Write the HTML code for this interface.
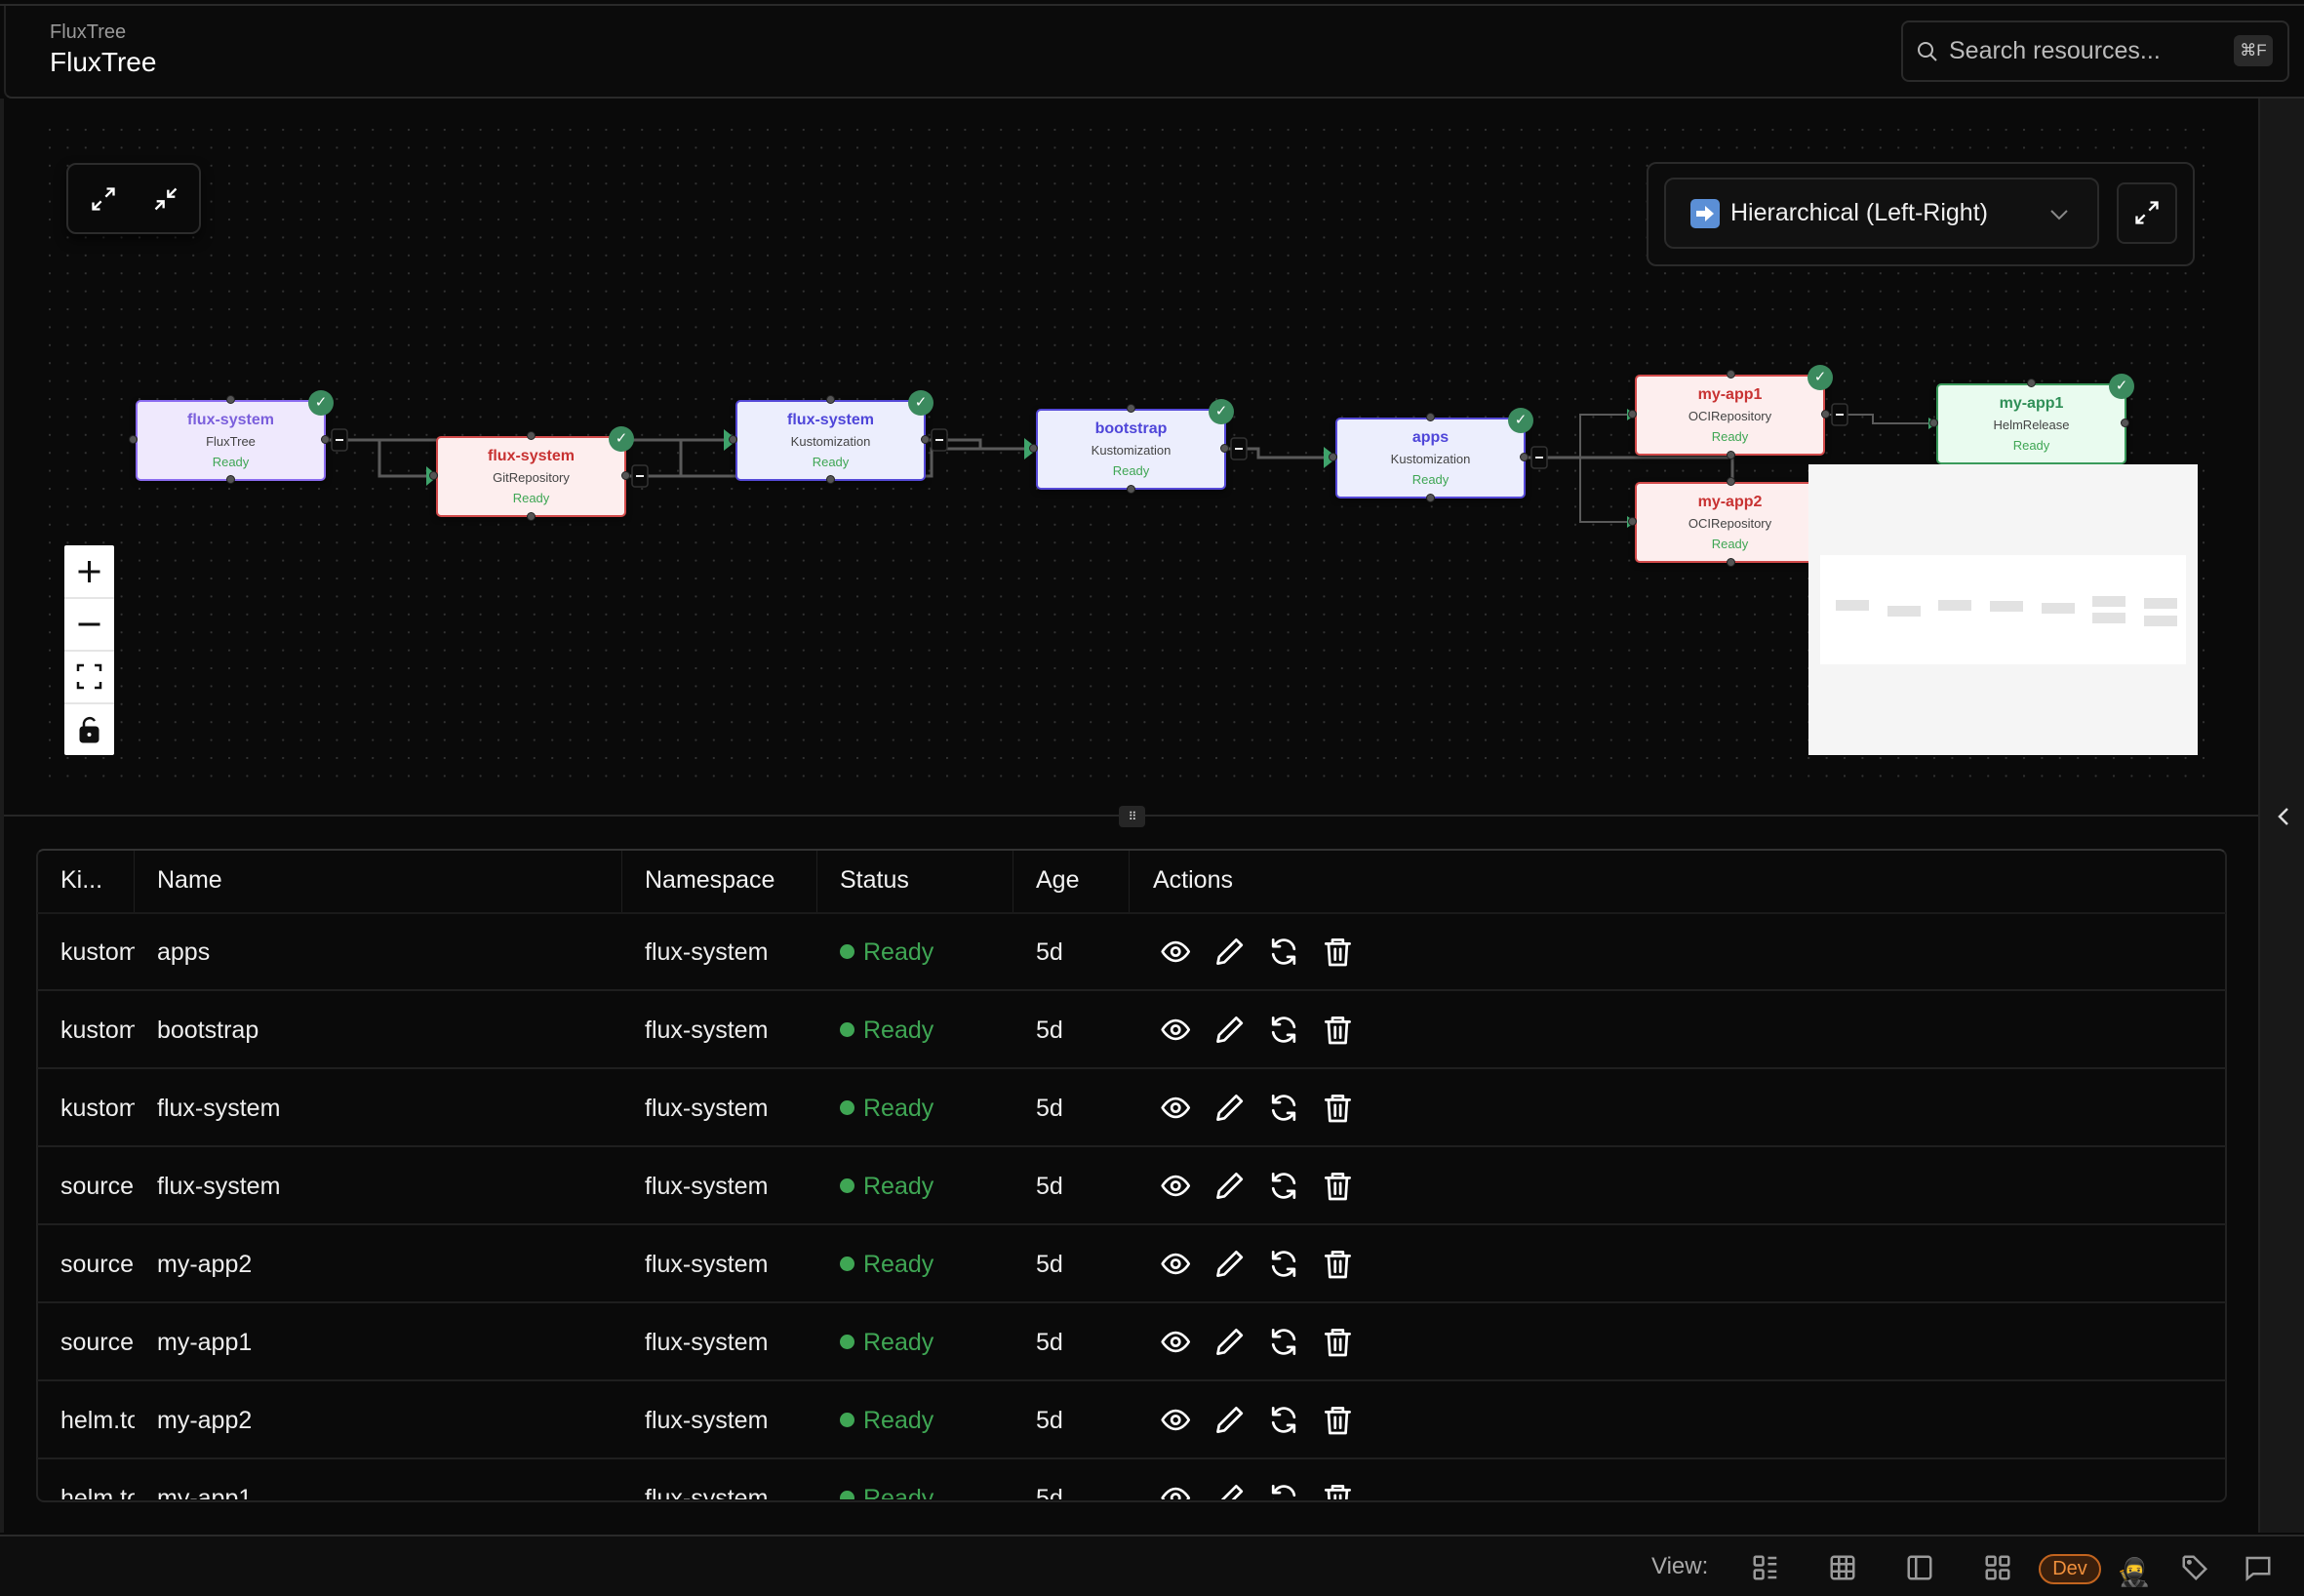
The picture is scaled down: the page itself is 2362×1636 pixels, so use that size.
<!DOCTYPE html>
<html><head><meta charset="utf-8"><style>
*{box-sizing:border-box;margin:0;padding:0}
body{width:2362px;height:1636px;background:#0a0a0a;font-family:"Liberation Sans",sans-serif;color:#eee;position:relative;overflow:hidden}
.abs{position:absolute}
.node{position:absolute;width:195px;height:83px;border:2px solid;border-radius:5px;text-align:center;box-shadow:0 2px 6px rgba(0,0,0,.5)}
.node .t{font-size:16px;font-weight:bold;margin-top:10px;line-height:18px}
.node .k{font-size:13px;color:#444;margin-top:5px;line-height:15px}
.node .r{font-size:13px;color:#3fa654;margin-top:6px;line-height:15px}
.pu{background:#efe9fd;border-color:#8b6cf0}.pu .t{color:#7b5fdc}
.re{background:#fdeeee;border-color:#d24a4a}.re .t{color:#c83232}
.bl{background:#eceefd;border-color:#5549d8}.bl .t{color:#4f46d9}
.gr{background:#e9fbef;border-color:#3a9a5b}.gr .t{color:#2f8f57}
.badge{position:absolute;right:-10px;top:-12px;width:26px;height:26px;border-radius:50%;background:#3b8a5e;color:#fff;font-size:15px;line-height:26px;text-align:center}
.hd{position:absolute;width:9px;height:9px;border-radius:50%;background:#555;border:1px solid #222}
.th{position:absolute;top:870px;height:65px;line-height:65px;font-size:25px;color:#f2f2f2}
.rw{position:absolute;height:80px;width:2244px;border-bottom:2px solid #1f1f1f}
.rw span{position:absolute;top:26px}
.rw .k{left:24px;width:76px;overflow:hidden;white-space:nowrap}
.rw .n{left:123px}.rw .ns{left:623px}
.rw .dot{left:823px;top:32px;width:15px;height:15px;border-radius:50%;background:#3fa654}
.rw .st{left:847px;color:#3fa654}.rw .a{left:1024px}
.rw svg{position:absolute;left:1151px;top:23px}
</style></head><body>
<div class="abs" style="left:0;top:4px;width:2362px;height:2px;background:#2a2a2a"></div>
<div class="abs" style="left:4px;top:6px;width:2358px;height:95px;background:#0b0b0b;border-bottom:2px solid #2a2a2a;border-left:2px solid #222;border-radius:0 0 0 8px"></div>
<div class="abs" style="left:51px;top:22px;font-size:20px;color:#999">FluxTree</div>
<div class="abs" style="left:51px;top:48px;font-size:28px;color:#fff">FluxTree</div>
<div class="abs" style="left:1949px;top:21px;width:398px;height:63px;border:2px solid #2a2a2a;border-radius:8px;background:#0c0c0c"></div>
<svg class="abs" style="left:1964px;top:41px" width="24" height="24" viewBox="0 0 24 24" fill="none" stroke="#bbb" stroke-width="2"><circle cx="10" cy="10" r="7"/><path d="M15 15l6 6"/></svg>
<div class="abs" style="left:1998px;top:38px;font-size:25px;color:#bbb">Search resources...</div>
<div class="abs" style="left:2290px;top:36px;width:40px;height:32px;background:#2a2a2a;border-radius:6px;color:#ccc;font-size:17px;line-height:32px;text-align:center">⌘F</div>

<div class="abs" style="left:2315px;top:101px;width:47px;height:1470px;background:#181818;border-left:2px solid #222"></div>
<svg class="abs" style="left:2332px;top:826px" width="20" height="22" viewBox="0 0 20 22" fill="none" stroke="#ddd" stroke-width="2.5"><path d="M13 3l-8 8 8 8"/></svg>

<svg class="abs" style="left:50px;top:132px" width="2220" height="675">
<defs><pattern id="d" width="18.4" height="18.4" patternUnits="userSpaceOnUse"><circle cx="1" cy="1" r="1.1" fill="#333"/></pattern></defs>
<rect width="2220" height="675" fill="url(#d)"/></svg>

<svg class="abs" style="left:0;top:0" width="2362" height="900" fill="none" stroke="#5a5a5a" stroke-width="3">
<path d="M334 451H744"/>
<path d="M389 451V488H437"/>
<path d="M642 488H698V451"/>
<path d="M642 488H955V460H1052"/>
<path d="M949 451H1005V460"/>
<path d="M1256 460H1290V469H1359"/>
<path d="M1563 469H1776V494"/>
<path d="M1620 469V425H1668M1620 469V535H1668" stroke-width="2"/>
<path d="M1872 425H1920V434H1977" stroke-width="2"/>
<g fill="#3fa36b" stroke="none">
<path d="M437 478L449 488L437 498Z"/><path d="M742 440L756 451L742 462Z"/>
<path d="M1050 449L1064 460L1050 471Z"/><path d="M1357 458L1371 469L1357 480Z"/>
<path d="M1668 419L1677 425L1668 431Z"/><path d="M1668 529L1677 535L1668 541Z"/><path d="M1977 428L1986 434L1977 440Z"/>
</g>
<g fill="#0a0a0a" stroke="#333" stroke-width="1.5">
<rect x="340" y="440" width="16" height="22" rx="3"/><rect x="648" y="477" width="16" height="22" rx="3"/><rect x="955" y="440" width="16" height="22" rx="3"/><rect x="1262" y="449" width="16" height="22" rx="3"/><rect x="1570" y="458" width="16" height="22" rx="3"/><rect x="1878" y="414" width="16" height="22" rx="3"/>
</g>
<g stroke="#eee" stroke-width="2"><path d="M344 451h8M652 488h8M959 451h8M1266 460h8M1574 469h8M1882 425h8"/></g>
</svg>

<div class="node pu" style="left:139px;top:410px"><div class="t">flux-system</div><div class="k">FluxTree</div><div class="r">Ready</div><div class="badge">✓</div></div>
<div class="node re" style="left:447px;top:447px"><div class="t">flux-system</div><div class="k">GitRepository</div><div class="r">Ready</div><div class="badge">✓</div></div>
<div class="node bl" style="left:754px;top:410px"><div class="t">flux-system</div><div class="k">Kustomization</div><div class="r">Ready</div><div class="badge">✓</div></div>
<div class="node bl" style="left:1062px;top:419px"><div class="t">bootstrap</div><div class="k">Kustomization</div><div class="r">Ready</div><div class="badge">✓</div></div>
<div class="node bl" style="left:1369px;top:428px"><div class="t">apps</div><div class="k">Kustomization</div><div class="r">Ready</div><div class="badge">✓</div></div>
<div class="node re" style="left:1676px;top:384px"><div class="t">my-app1</div><div class="k">OCIRepository</div><div class="r">Ready</div><div class="badge">✓</div></div>
<div class="node re" style="left:1676px;top:494px"><div class="t">my-app2</div><div class="k">OCIRepository</div><div class="r">Ready</div></div>
<div class="node gr" style="left:1985px;top:393px"><div class="t">my-app1</div><div class="k">HelmRelease</div><div class="r">Ready</div><div class="badge">✓</div></div>
<div class="hd" style="left:132px;top:446px"></div><div class="hd" style="left:329px;top:446px"></div><div class="hd" style="left:232px;top:405px"></div><div class="hd" style="left:232px;top:487px"></div>
<div class="hd" style="left:440px;top:483px"></div><div class="hd" style="left:637px;top:483px"></div><div class="hd" style="left:540px;top:442px"></div><div class="hd" style="left:540px;top:525px"></div>
<div class="hd" style="left:747px;top:446px"></div><div class="hd" style="left:944px;top:446px"></div><div class="hd" style="left:847px;top:405px"></div><div class="hd" style="left:847px;top:487px"></div>
<div class="hd" style="left:1055px;top:455px"></div><div class="hd" style="left:1251px;top:455px"></div><div class="hd" style="left:1155px;top:414px"></div><div class="hd" style="left:1155px;top:497px"></div>
<div class="hd" style="left:1362px;top:464px"></div><div class="hd" style="left:1558px;top:464px"></div><div class="hd" style="left:1462px;top:423px"></div><div class="hd" style="left:1462px;top:506px"></div>
<div class="hd" style="left:1669px;top:420px"></div><div class="hd" style="left:1867px;top:420px"></div><div class="hd" style="left:1770px;top:379px"></div><div class="hd" style="left:1770px;top:462px"></div>
<div class="hd" style="left:1669px;top:530px"></div><div class="hd" style="left:1770px;top:489px"></div><div class="hd" style="left:1770px;top:572px"></div>
<div class="hd" style="left:1978px;top:429px"></div><div class="hd" style="left:2174px;top:429px"></div><div class="hd" style="left:2078px;top:388px"></div>

<div class="abs" style="left:1854px;top:476px;width:399px;height:298px;background:#f5f5f5"></div>
<div class="abs" style="left:1866px;top:569px;width:375px;height:112px;background:#fff"></div>
<svg class="abs" style="left:1866px;top:569px" width="375" height="112" fill="#e2e2e2">
<rect x="16" y="46" width="34" height="11"/><rect x="69" y="52" width="34" height="11"/><rect x="121" y="46" width="34" height="11"/><rect x="174" y="47" width="34" height="11"/><rect x="227" y="49" width="34" height="11"/><rect x="279" y="42" width="34" height="11"/><rect x="279" y="59" width="34" height="11"/><rect x="332" y="44" width="34" height="11"/><rect x="332" y="62" width="34" height="11"/></svg>

<div class="abs" style="left:68px;top:167px;width:138px;height:73px;border:2px solid #2c2c2c;border-radius:10px;background:#0a0a0a;box-shadow:0 6px 12px rgba(0,0,0,.6)"></div>
<svg class="abs" style="left:92px;top:190px" width="28" height="28" viewBox="0 0 24 24" fill="none" stroke="#fff" stroke-width="2"><path d="M15 3h6v6M21 3l-7 7M9 21H3v-6M3 21l7-7"/></svg>
<svg class="abs" style="left:156px;top:190px" width="28" height="28" viewBox="0 0 24 24" fill="none" stroke="#fff" stroke-width="2"><path d="M4 14h6v6M10 14l-7 7M20 10h-6V4M14 10l7-7"/></svg>

<div class="abs" style="left:1688px;top:166px;width:562px;height:107px;border:2px solid #2a2a2a;border-radius:10px;background:#0c0c0c"></div>
<div class="abs" style="left:1706px;top:182px;width:446px;height:73px;border:2px solid #2a2a2a;border-radius:10px;background:#111"></div>
<div class="abs" style="left:1733px;top:204px;width:30px;height:30px;border-radius:5px;background:#5b8fd6"></div>
<svg class="abs" style="left:1736px;top:207px" width="24" height="24" viewBox="0 0 24 24"><path d="M3 9h9V4l9 8-9 8v-5H3z" fill="#fff"/></svg>
<div class="abs" style="left:1774px;top:204px;font-size:25px;color:#f0f0f0">Hierarchical (Left-Right)</div>
<svg class="abs" style="left:2099px;top:210px" width="24" height="20" viewBox="0 0 24 20" fill="none" stroke="#888" stroke-width="2"><path d="M4 6l8 8 8-8"/></svg>
<div class="abs" style="left:2170px;top:187px;width:62px;height:63px;border:2px solid #2a2a2a;border-radius:8px;background:#0f0f0f"></div>
<svg class="abs" style="left:2187px;top:204px" width="28" height="28" viewBox="0 0 24 24" fill="none" stroke="#fff" stroke-width="2"><path d="M15 3h6v6M21 3l-7 7M9 21H3v-6M3 21l7-7"/></svg>

<div class="abs" style="left:66px;top:559px;width:51px;height:215px;background:#fff;border-radius:2px"></div>
<div class="abs" style="left:66px;top:612px;width:51px;height:2px;background:#e5e5e5"></div>
<div class="abs" style="left:66px;top:666px;width:51px;height:2px;background:#e5e5e5"></div>
<div class="abs" style="left:66px;top:720px;width:51px;height:2px;background:#e5e5e5"></div>
<svg class="abs" style="left:66px;top:559px" width="51" height="215" fill="none" stroke="#111" stroke-width="3">
<path d="M25.5 16v22M14.5 27h22"/><path d="M14.5 81h22"/>
<path d="M14 129v-6h6M31 123h6v6M37 140v6h-6M20 146h-6v-6" stroke-width="2.5"/>
<rect x="17" y="187" width="17" height="14" rx="2" fill="#111"/><path d="M20 187v-5a6 6 0 0 1 11 -2" stroke-width="2.5"/><circle cx="25.5" cy="194" r="2" fill="#fff" stroke="none"/>
</svg>

<div class="abs" style="left:4px;top:835px;width:2311px;height:2px;background:#262626"></div>
<div class="abs" style="left:1147px;top:826px;width:27px;height:22px;background:#262626;border-radius:4px;color:#ddd;font-size:12px;line-height:22px;text-align:center;letter-spacing:-1px">⠿</div>
<div class="abs" style="left:0;top:101px;width:4px;height:1470px;background:#1c1c1c"></div>

<div class="abs" style="left:37px;top:870px;width:2246px;height:670px;border:2px solid #222;border-top-color:#333;border-radius:8px;background:#0a0a0a"></div>
<div class="abs" style="left:137px;top:872px;width:1px;height:63px;background:#1e1e1e"></div>
<div class="abs" style="left:637px;top:872px;width:1px;height:63px;background:#1e1e1e"></div>
<div class="abs" style="left:837px;top:872px;width:1px;height:63px;background:#1e1e1e"></div>
<div class="abs" style="left:1038px;top:872px;width:1px;height:63px;background:#1e1e1e"></div>
<div class="abs" style="left:1157px;top:872px;width:1px;height:63px;background:#1e1e1e"></div>
<div class="th" style="left:62px">Ki...</div>
<div class="th" style="left:161px">Name</div>
<div class="th" style="left:661px">Namespace</div>
<div class="th" style="left:861px">Status</div>
<div class="th" style="left:1062px">Age</div>
<div class="th" style="left:1182px">Actions</div>
<div class="abs" style="left:38px;top:935px;width:2244px;height:2px;background:#1a1a1a"></div>

<svg width="0" height="0" style="position:absolute"><defs>
<g id="icons" fill="none" stroke="#fff" stroke-width="2" stroke-linecap="round" stroke-linejoin="round">
<path d="M2 12s4-7 10-7 10 7 10 7-4 7-10 7S2 12 2 12z"/><circle cx="12" cy="12" r="3"/>
<g transform="translate(41 0)"><path d="M17 3l4 4L8 20l-5 1 1-5z"/></g>
<g transform="translate(82 0)"><path d="M20 10a8 8 0 0 0-14-4L4 8M4 3v5h5M4 14a8 8 0 0 0 14 4l2-2M20 21v-5h-5"/></g>
<g transform="translate(123 0)"><path d="M3 6h18M8 6V3h8v3M5 6l1 16h12l1-16M10 10v8M14 10v8"/></g>
</g></defs></svg>

<div class="abs" style="left:38px;top:936px;width:2244px;height:601px;overflow:hidden;font-size:25px;color:#eee">
<div class="rw" style="top:0"><span class="k">kustomization</span><span class="n">apps</span><span class="ns">flux-system</span><span class="dot"></span><span class="st">Ready</span><span class="a">5d</span><svg width="200" height="33" viewBox="0 0 148 24"><use href="#icons"/></svg></div>
<div class="rw" style="top:80px"><span class="k">kustomization</span><span class="n">bootstrap</span><span class="ns">flux-system</span><span class="dot"></span><span class="st">Ready</span><span class="a">5d</span><svg width="200" height="33" viewBox="0 0 148 24"><use href="#icons"/></svg></div>
<div class="rw" style="top:160px"><span class="k">kustomization</span><span class="n">flux-system</span><span class="ns">flux-system</span><span class="dot"></span><span class="st">Ready</span><span class="a">5d</span><svg width="200" height="33" viewBox="0 0 148 24"><use href="#icons"/></svg></div>
<div class="rw" style="top:240px"><span class="k">source.toolkit</span><span class="n">flux-system</span><span class="ns">flux-system</span><span class="dot"></span><span class="st">Ready</span><span class="a">5d</span><svg width="200" height="33" viewBox="0 0 148 24"><use href="#icons"/></svg></div>
<div class="rw" style="top:320px"><span class="k">source.toolkit</span><span class="n">my-app2</span><span class="ns">flux-system</span><span class="dot"></span><span class="st">Ready</span><span class="a">5d</span><svg width="200" height="33" viewBox="0 0 148 24"><use href="#icons"/></svg></div>
<div class="rw" style="top:400px"><span class="k">source.toolkit</span><span class="n">my-app1</span><span class="ns">flux-system</span><span class="dot"></span><span class="st">Ready</span><span class="a">5d</span><svg width="200" height="33" viewBox="0 0 148 24"><use href="#icons"/></svg></div>
<div class="rw" style="top:480px"><span class="k">helm.toolkit</span><span class="n">my-app2</span><span class="ns">flux-system</span><span class="dot"></span><span class="st">Ready</span><span class="a">5d</span><svg width="200" height="33" viewBox="0 0 148 24"><use href="#icons"/></svg></div>
<div class="rw" style="top:560px;border-bottom:none"><span class="k">helm.toolkit</span><span class="n">my-app1</span><span class="ns">flux-system</span><span class="dot"></span><span class="st">Ready</span><span class="a">5d</span><svg width="200" height="33" viewBox="0 0 148 24"><use href="#icons"/></svg></div>
</div>

<div class="abs" style="left:0;top:1573px;width:2362px;height:63px;background:#0e0e0e;border-top:2px solid #2a2a2a"></div>
<div class="abs" style="left:1693px;top:1592px;font-size:24px;color:#aaa">View:</div>
<svg class="abs" style="left:1795px;top:1592px" width="30" height="30" viewBox="0 0 24 24" fill="none" stroke="#9a9a9a" stroke-width="2"><rect x="3" y="3" width="7" height="7" rx="1"/><rect x="3" y="14" width="7" height="7" rx="1"/><path d="M14 4h7M14 9h7M14 15h7M14 20h7"/></svg>
<svg class="abs" style="left:1874px;top:1592px" width="30" height="30" viewBox="0 0 24 24" fill="none" stroke="#9a9a9a" stroke-width="2"><rect x="3" y="3" width="18" height="18" rx="2"/><path d="M3 9h18M3 15h18M9 3v18M15 3v18"/></svg>
<svg class="abs" style="left:1953px;top:1592px" width="30" height="30" viewBox="0 0 24 24" fill="none" stroke="#9a9a9a" stroke-width="2"><rect x="3" y="3" width="18" height="18" rx="2"/><path d="M9 3v18"/></svg>
<svg class="abs" style="left:2033px;top:1592px" width="30" height="30" viewBox="0 0 24 24" fill="none" stroke="#9a9a9a" stroke-width="2"><rect x="3" y="3" width="7" height="7" rx="1"/><rect x="14" y="3" width="7" height="7" rx="1"/><rect x="3" y="14" width="7" height="7" rx="1"/><rect x="14" y="14" width="7" height="7" rx="1"/></svg>
<div class="abs" style="left:2090px;top:1593px;width:64px;height:31px;border:2px solid #c2641f;border-radius:16px;background:#3a1f0c;color:#f0903c;font-size:20px;line-height:27px;text-align:center">Dev</div>
<div class="abs" style="left:2170px;top:1590px;font-size:28px;font-family:'Noto Sans CJK JP',sans-serif">🥷</div>
<svg class="abs" style="left:2235px;top:1592px" width="30" height="30" viewBox="0 0 24 24" fill="none" stroke="#9a9a9a" stroke-width="2"><path d="M3 4v7l10 10 8-8L11 3H4z"/><circle cx="7.5" cy="7.5" r="1"/></svg>
<svg class="abs" style="left:2300px;top:1592px" width="30" height="30" viewBox="0 0 24 24" fill="none" stroke="#9a9a9a" stroke-width="2"><path d="M3 4h18v13H8l-5 4z"/></svg>
</body></html>
